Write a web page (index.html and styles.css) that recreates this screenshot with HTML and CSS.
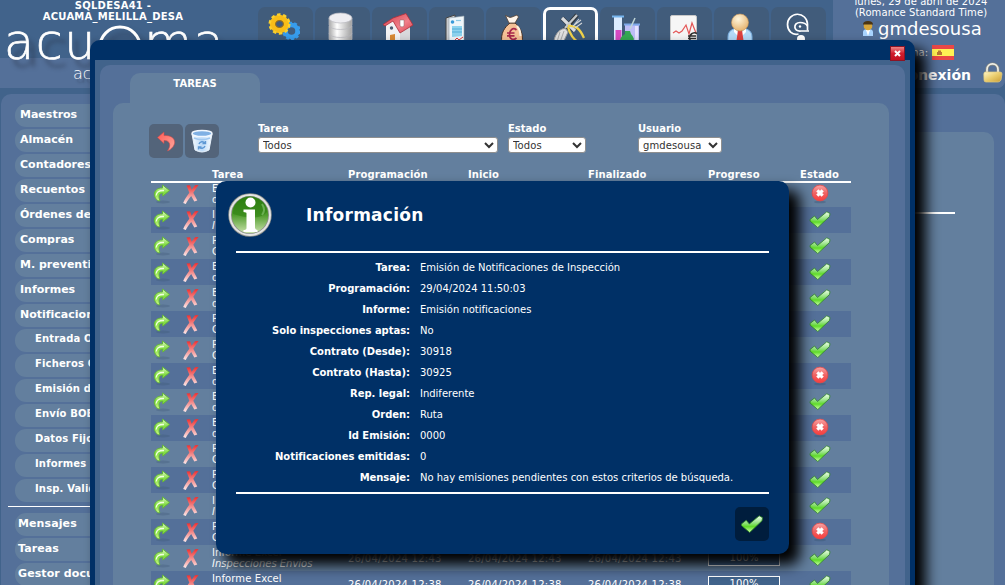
FILE: index.html
```html
<!DOCTYPE html>
<html lang="es">
<head>
<meta charset="utf-8">
<title>acuama - Tareas</title>
<link rel="stylesheet" href="styles.css">
</head>
<body>
<svg class="defs" width="0" height="0">
  <defs>
    <linearGradient id="gGreen" x1="0" y1="0" x2="0" y2="1"><stop offset="0" stop-color="#e4fac8"/><stop offset=".5" stop-color="#7ddc3c"/><stop offset="1" stop-color="#d4fb90"/></linearGradient>
    <linearGradient id="gCheck" x1="0" y1="0" x2="0" y2="1"><stop offset="0" stop-color="#f4fff0"/><stop offset=".45" stop-color="#8fe07a"/><stop offset=".65" stop-color="#5fdc28"/><stop offset="1" stop-color="#d2ffb0"/></linearGradient>
    <linearGradient id="gX" x1="0" y1="0" x2="0" y2="1"><stop offset="0" stop-color="#ee2f2f"/><stop offset=".5" stop-color="#f28d8d"/><stop offset="1" stop-color="#ffe9e9"/></linearGradient>
    <linearGradient id="gErr" x1="0" y1="0" x2="0" y2="1"><stop offset="0" stop-color="#f9a5a5"/><stop offset=".5" stop-color="#f06464"/><stop offset="1" stop-color="#fa3c3c"/></linearGradient>
    <linearGradient id="gMetal" x1="0" y1="0" x2="1" y2="0"><stop offset="0" stop-color="#a8a8a8"/><stop offset=".35" stop-color="#fff"/><stop offset="1" stop-color="#a0a0a0"/></linearGradient>
    <linearGradient id="gInfo" x1="0" y1="0" x2="0" y2="1"><stop offset="0" stop-color="#2c7c10"/><stop offset=".5" stop-color="#4f9c2d"/><stop offset="1" stop-color="#d5e8b8"/></linearGradient>
    <linearGradient id="gUndo" x1="0" y1="0" x2="1" y2="1"><stop offset="0" stop-color="#ff5a54"/><stop offset="1" stop-color="#ffaaa0"/></linearGradient>
    <linearGradient id="gRoof" x1="0" y1="0" x2="1" y2="1"><stop offset="0" stop-color="#d83b48"/><stop offset=".6" stop-color="#f0808a"/><stop offset="1" stop-color="#d8404c"/></linearGradient>
    <radialGradient id="gHead" cx=".4" cy=".3" r=".8"><stop offset="0" stop-color="#fff6dc"/><stop offset="1" stop-color="#e2ab62"/></radialGradient>
    <linearGradient id="gLock" x1="0" y1="0" x2="1" y2="1"><stop offset="0" stop-color="#fff6c8"/><stop offset=".5" stop-color="#e9cc6c"/><stop offset="1" stop-color="#c89c36"/></linearGradient>
    <linearGradient id="gBin" x1="0" y1="0" x2="1" y2="0"><stop offset="0" stop-color="#f4faff"/><stop offset=".5" stop-color="#bcdaf8"/><stop offset="1" stop-color="#f8fcff"/></linearGradient>
  </defs>
  <symbol id="i-redo" viewBox="0 0 18 20"><ellipse cx="10" cy="18" rx="7" ry="1.500" fill="#3c5674" opacity=".3"/><path d="M9.500 1 L16.500 6.500 L9.800 12 V9.300 C6.500 9.200 5 11.500 6.800 16.800 C4.500 17.500 1.800 14 1.300 11 C1 6.500 4.500 3.800 9.500 4 Z" fill="url(#gGreen)" stroke="#64b53a"/><path d="M3.200 11.500 C3.500 8 6 6.300 11 6.500" fill="none" stroke="#f0ffe0" stroke-width="1.300"/></symbol>
  <symbol id="i-x" viewBox="0 0 18 20"><path d="M4.500 1.500 L8 1.300 L9.700 5.800 L13 1.200 L16.500 1 L11.300 8.800 L15.300 16.500 L12.300 17.500 L9.200 12 C7 14.500 5 17.500 3.800 20 L1.200 19 C2.500 15.500 5 12 7.300 8.800 Z" fill="url(#gX)"/></symbol>
  <symbol id="i-ok" viewBox="0 0 22 18"><path d="M1 8.500 L5.500 5 L8.500 8.500 L17.800 .8 L21 2.500 L20.500 5.500 L8.800 16.500 L1.200 10.200 Z" fill="url(#gCheck)" stroke="#2d8426" stroke-width=".8" stroke-linejoin="round"/></symbol>
  <symbol id="i-err" viewBox="0 0 18 20"><ellipse cx="9" cy="18" rx="6" ry="1.300" fill="#34506e" opacity=".35"/><circle cx="9" cy="9" r="7.900" fill="url(#gErr)" stroke="#e04a4a" stroke-width=".8"/><path d="M6.300 6.300 L11.700 11.700 M11.700 6.300 L6.300 11.700" stroke="#fff" stroke-width="3.100"/></symbol>
</svg>

<div class="page">
  <header class="header">
    <div class="brand">
      <div class="db">SQLDESA41 -<br>ACUAMA_MELILLA_DESA</div>
      <div class="logo"><span>acu</span><svg class="ring" width="44" height="44" viewBox="0 0 44 44"><ellipse cx="22" cy="22" rx="20" ry="20" fill="none" stroke="#fff" stroke-width="3"/></svg><span>ma</span></div>
      <div class="slogan">acuama</div>
    </div>
    <nav class="tools">
      <a class="tool"><svg width="32" height="32" viewBox="0 0 32 32"><circle cx="23.500" cy="19" r="6" fill="none" stroke="#379ded" stroke-width="4.500"/><circle cx="23.500" cy="19" r="8.300" fill="none" stroke="#379ded" stroke-width="2" stroke-dasharray="3 2.200"/><ellipse cx="11.500" cy="12" rx="7" ry="6.500" fill="none" stroke="#f7bd18" stroke-width="5.500"/><ellipse cx="11.500" cy="12" rx="9.800" ry="9.500" fill="none" stroke="#fbd02c" stroke-width="2.400" stroke-dasharray="3.500 2.600"/><ellipse cx="11.500" cy="12" rx="4" ry="3.500" fill="none" stroke="#a8730a"/></svg></a>
      <a class="tool"><svg width="32" height="32" viewBox="0 0 32 32"><g fill="url(#gMetal)" stroke="#b8b8be" stroke-width=".7"><path d="M4 21 v6 c0 6 23 6 23 0 v-6z"/><path d="M4 14 v7 c0 6 23 6 23 0 v-7z"/><path d="M4 6 v7 c0 6 23 6 23 0 V6z"/><ellipse cx="15.500" cy="6" rx="11.500" ry="5" fill="#ededf1"/></g></svg></a>
      <a class="tool"><svg width="32" height="32" viewBox="0 0 32 32"><path d="M4 13 L11 7 L18 20 V32 H4 Z" fill="#f2f2f4"/><path d="M18 20 L28 13 V32 H18Z" fill="#d9d9dd"/><path d="M1 12.500 L11 6 L24 1.500 L31 13 L18 21 L11 9 L3 14Z" fill="url(#gRoof)" stroke="#b02e38" stroke-width=".8"/><path d="M18 8 h4 v6 l-2 1 -2-1z" fill="#fff" stroke="#8a6a6a" stroke-width=".5"/><circle cx="9.500" cy="16" r="1.700" fill="#4a5a70"/><path d="M8 32 V23 l5-1 V32z" fill="#d98a35"/></svg></a>
      <a class="tool"><svg width="32" height="32" viewBox="0 0 32 32"><path d="M7 6 L16 3 V32 H7Z" fill="#c9ccd0" stroke="#444"/><path d="M10 6 L25 4 V32 H10Z" fill="#eef6fa" stroke="#90a0aa" stroke-width=".6"/><circle cx="13.500" cy="10" r="1.800" fill="#3a9ad8"/><path d="M17 8.500 h5" stroke="#8cc8e4" stroke-width="1.200"/><path d="M13 14 h10 v10 l-10 1z" fill="#8ed3ee"/><path d="M13 17 h10 M13 20 h10" stroke="#4ca8d4" stroke-width=".9"/><path d="M15 29 l3-3 2 2 4-3" stroke="#e03838" fill="none"/></svg></a>
      <a class="tool"><svg width="32" height="32" viewBox="0 0 32 32"><path d="M14 11 C9 15 4 21 6 31 H26 C28 21 23 14 19 11Z" fill="#f5c196" stroke="#433026"/><path d="M9.500 3.500 L14 5.500 L16 5 L21 3 L22.500 5 L19 11 H13 Z" fill="#fff5ea" stroke="#554030" stroke-width=".8"/><path d="M20.500 18 C17 15 13.500 18 13.500 22.500 S17 29 20.500 26 M11 21 h7.500 M11 23.800 h7.500" fill="none" stroke="#a8284c" stroke-width="1.700"/><path d="M21 14 q3.500 4 3.500 10" stroke="#fff0e0" stroke-width="2" fill="none"/></svg></a>
      <a class="tool selected"><svg width="32" height="32" viewBox="0 0 32 32"><path d="M9 5 L22 18 M24 2 L8 21" stroke="#30363c" stroke-width="4.500"/><path d="M9 5 L22 18" stroke="#d9dcdf" stroke-width="3.200"/><path d="M24 2 L12 15" stroke="#c5c9cc" stroke-width="2.300"/><path d="M1 28 C2 20 9 14 13 16 L15 19 L9 32" fill="#e0e0e0" stroke="#999"/><path d="M7 19 L3 32 M11 18 L6 32" stroke="#999" stroke-width=".8"/><path d="M15 13 C23 12 27 16 31 25 M15 14 C17 22 20 26 26 30" fill="none" stroke="#f0d24a" stroke-width="2.300"/><path d="M20 13 L28 7 M22 15 L29 10 M21 12 L26 6" stroke="#d2d6da" stroke-width="1.100"/></svg></a>
      <a class="tool"><svg width="32" height="32" viewBox="0 0 32 32"><path d="M4 4 H12 V32 H4Z" fill="#dcecff"/><path d="M2 4.500 H14" stroke="#76b5ee" stroke-width="2"/><path d="M5.500 18 h6 v14 h-6z" fill="#d84ac2"/><path d="M15 12 H29 V32 H15Z" fill="#bdbdf7"/><path d="M14 12.500 H30" stroke="#7ca8e8" stroke-width="2"/><path d="M25 14 h3v18h-3z" fill="#e4e2ff"/><path d="M25 6 L20 17" stroke="#c0d6d6" stroke-width="1.500"/><path d="M15 19 h5 l1 3 q2 2 3 5 l-2 5 h-9 l-3-4 q1-4 5-6z" fill="#34a853"/></svg></a>
      <a class="tool"><svg width="32" height="32" viewBox="0 0 32 32"><rect x="3.500" y="3.500" width="26" height="30" rx="1.500" fill="#f6f6f6" stroke="#c8c8c8"/><path d="M6 21 l3-2 3 2 3-2 4-6 3 9 3-11 4 10" fill="none" stroke="#e45656" stroke-width="1.200"/><path d="M30 21.500 a5 5 0 1 0 1 8 M21 24 h8 M21 26.500 h8" stroke="#303030" stroke-width="1.700" fill="none"/></svg></a>
      <a class="tool"><svg width="32" height="32" viewBox="0 0 32 32"><path d="M4 32 V25 C4 18 10 16 16 16 S28 18 28 25 V32Z" fill="#b4d9f8" stroke="#78aee0"/><path d="M10 16 L16 22 L22 16 V20 L16 26 L10 20Z" fill="#fff"/><path d="M14 18 h4 l2 14 h-8z" fill="#dc3f3f"/><circle cx="16" cy="10.500" r="8.500" fill="url(#gHead)" stroke="#ca9656" stroke-width=".6"/></svg></a>
      <a class="tool"><svg width="32" height="32" viewBox="0 0 32 32"><path d="M17.500 22 C11 23.500 6.500 18.500 6.500 12.500 A10 10 0 0 1 26.500 12 V18.500" fill="none" stroke="#fff" stroke-width="1.700"/><path d="M28 19 H20 C12 20 12 10.500 19 10.500 C22 10.500 25 11.500 26.500 14" fill="none" stroke="#fff" stroke-width="1.700"/><circle cx="19" cy="14.500" r="1.200" fill="#fff"/><circle cx="20" cy="27" r="4" fill="#fff"/></svg></a>
    </nav>
    <div class="session">
      <div class="date">lunes, 29 de abril de 2024<br>(Romance Standard Time)</div>
      <div class="user"><svg width="12" height="15" viewBox="0 0 12 15"><path d="M1 15 V11 Q1 8 6 8 T11 11 V15Z" fill="#a9d4ff"/><path d="M4 9h4l-2 6z" fill="#fff"/><circle cx="6" cy="5" r="4.300" fill="#d6a63c"/><path d="M1 3.500 Q1 0 6 0 T11 3.500Z" fill="#4a3413"/></svg><span>gmdesousa</span></div>
      <div class="lang"><span>Idioma:</span><svg width="22" height="15" viewBox="0 0 22 15"><path fill="#e94747" d="M0 0h22v15H0z"/><path fill="#fff253" d="M0 4h22v7H0z"/><path d="M5 7h5v3H5zM6 5.500h3v2H6z" fill="#b97835"/></svg></div>
      <div class="exit"><b>Desconexión</b><svg width="20" height="21" viewBox="0 0 20 21"><path d="M4 11 V7.500 C4 0 15 0 15 7.500 V11" fill="none" stroke="#8d8d82" stroke-width="3"/><path d="M4 11 V7.500 C4 0 15 0 15 7.500 V11" fill="none" stroke="#efefe8" stroke-width="1.700"/><path d="M2 10 H17 Q19 10 19 12 L18 18 Q17 20 15 20 H3 Q1 20 1 18 L.8 12 Q1 10 2 10Z" fill="url(#gLock)" stroke="#e2cb80" stroke-width=".7"/></svg></div>
    </div>
  </header>

  <div class="body">
    <aside class="menu">
      <a>Maestros</a><a>Almacén</a><a>Contadores</a><a>Recuentos</a><a>Órdenes de trabajo</a><a>Compras</a><a>M. preventivo</a><a>Informes</a><a>Notificaciones</a>
      <a class="sub">Entrada OT</a><a class="sub">Ficheros OT</a><a class="sub">Emisión de</a><a class="sub">Envío BOE</a><a class="sub">Datos Fijos</a><a class="sub">Informes</a><a class="sub">Insp. Validar</a>
      <hr>
      <a class="foot">Mensajes</a><a class="foot">Tareas</a><a class="foot">Gestor docu</a>
    </aside>
    <main class="main"><div class="sheet"><div class="rule"></div></div></main>
  </div>

  <section class="window">
    <div class="titlebar"><button class="close"><svg width="9" height="9" viewBox="0 0 9 9"><path d="M2 2 L7 7 M7 2 L2 7" stroke="#fff" stroke-width="2"/></svg></button></div>
    <div class="frame">
      <div class="panel">
        <div class="tab">TAREAS</div>
        <div class="content">
          <div class="filters">
            <div class="actions">
              <button class="act"><svg width="22" height="24" viewBox="0 0 22 24"><path d="M2.500 8.500 L9 3 V6.500 C22 6 23 17 12.500 22 C16.500 16 15 11.500 9 11.500 V14.500Z" fill="url(#gUndo)" stroke="#c84c4c" stroke-width=".6"/></svg></button>
              <button class="act"><svg width="24" height="26" viewBox="0 0 24 26"><path d="M2 6 L5 22 Q12 26 19 22 L22 6Z" fill="url(#gBin)" stroke="#e8f2fc"/><ellipse cx="12" cy="5.500" rx="10" ry="3" fill="#7fb0e4" stroke="#f0f7ff" stroke-width="1.500"/><path d="M4 10 Q12 13.500 20 10" fill="none" stroke="#a0c8f0" stroke-width="1.500"/><path d="M9 16 a3.500 3.500 0 0 1 6 -1 M15 18 a3.500 3.500 0 0 1-6 1 M15.500 13v2.500h-3 M8.500 21.500v-2.500h3" fill="none" stroke="#5e98d4" stroke-width="1.400"/></svg></button>
            </div>
            <label class="f-task">Tarea<select><option>Todos</option></select></label>
            <label class="f-state">Estado<select><option>Todos</option></select></label>
            <label class="f-user">Usuario<select><option>gmdesousa</option></select></label>
          </div>
          <div class="grid head"><span></span><span></span><span>Tarea</span><span>Programación</span><span>Inicio</span><span>Finalizado</span><span>Progreso</span><span class="center">Estado</span></div>
          <div id="rows"></div>
        </div>
      </div>
    </div>
  </section>

  <section class="modal">
    <div class="modal-head">
      <svg width="46" height="46" viewBox="0 0 46 46"><circle cx="23" cy="23" r="20" fill="url(#gInfo)" stroke="#8d918c" stroke-width="3.500"/><circle cx="23" cy="23" r="20" fill="none" stroke="#e4e4e4" stroke-width="2"/><path d="M6 22 A17 17 0 0 1 40 20 Q32 30 6 22Z" fill="#267a0c" opacity=".45"/><path d="M35 12 Q39 18 35 23" stroke="#8cc978" stroke-width="2" fill="none" opacity=".6"/><circle cx="23.500" cy="10.500" r="5" fill="#fff"/><path d="M16.500 17.500 H28 V36 Q28.500 38 30.500 38 V40 H16.500 V38 Q19.500 38 19.500 36 V21.500 Q19.500 20 16.500 20Z" fill="#fff"/></svg>
      <h1>Información</h1>
    </div>
    <dl class="details">
      <dt>Tarea:</dt><dd>Emisión de Notificaciones de Inspección</dd>
      <dt>Programación:</dt><dd>29/04/2024 11:50:03</dd>
      <dt>Informe:</dt><dd>Emisión notificaciones</dd>
      <dt>Solo inspecciones aptas:</dt><dd>No</dd>
      <dt>Contrato (Desde):</dt><dd>30918</dd>
      <dt>Contrato (Hasta):</dt><dd>30925</dd>
      <dt>Rep. legal:</dt><dd>Indiferente</dd>
      <dt>Orden:</dt><dd>Ruta</dd>
      <dt>Id Emisión:</dt><dd>0000</dd>
      <dt>Notificaciones emitidas:</dt><dd>0</dd>
      <dt>Mensaje:</dt><dd>No hay emisiones pendientes con estos criterios de búsqueda.</dd>
    </dl>
    <div class="modal-foot"><button class="accept"><svg width="24" height="19"><use href="#i-ok"/></svg></button></div>
  </section>
</div>
<script src="script.js"></script>
</body>
</html>
```
FILE: styles.css
```css
* { box-sizing: border-box; }
body { margin: 0; background: #41638b; color: #fff; font: 10px/12px Verdana, "DejaVu Sans", sans-serif; }
button { border: 0; padding: 0; margin: 0; display: flex; align-items: center; justify-content: center; }
svg { flex: none; display: block; }
.defs { position: absolute; }
.page { position: relative; width: 1005px; height: 585px; overflow: hidden; background: #41638b; }

.header { display: flex; height: 88px; background: linear-gradient(#41638b 58px, #547099 58px); border-radius: 0 0 8px 0; overflow: hidden; }
.brand { width: 258px; flex: none; white-space: nowrap; }
.db { width: 226px; height: 22px; font-weight: bold; line-height: 11px; letter-spacing: .25px; text-align: center; }
.logo { display: flex; height: 44px; padding-left: 4px; font: 200 49px/42px "DejaVu Sans Light", "DejaVu Sans", sans-serif; letter-spacing: 1.7px; -webkit-text-stroke: .7px #fff; text-shadow: 6px 8px 4px rgba(40, 50, 70, .6); }
.logo .ring { margin: 3px 2px 0 1px; filter: drop-shadow(5px 7px 3px rgba(40, 50, 70, .6)); }
.slogan { padding-left: 73px; font: 200 16px/16px "DejaVu Sans Light", "DejaVu Sans", sans-serif; text-shadow: 3px 4px 2px rgba(40, 50, 70, .4); }
.tools { display: flex; gap: 2px; width: 575px; flex: none; padding-top: 7px; }
.tool { width: 55px; height: 55px; flex: none; padding: 5px 0 0 10px; border-radius: 7px; background: #415c7b; }
.tool.selected { border: 3px solid #fff; padding: 3px 0 0 7px; }
.session { flex: 1; background: #547099; white-space: nowrap; }
.date { height: 19px; margin-top: -4px; padding-left: 4px; line-height: 11px; letter-spacing: .07px; text-align: center; }
.user { display: flex; align-items: center; gap: 4px; height: 26px; padding: 2px 0 0 29px; font-size: 18px; line-height: 22px; }
.user svg { margin-top: -2px; }
.lang { display: flex; align-items: center; justify-content: flex-end; gap: 4px; height: 21px; padding: 2px 51px 0 0; }
.exit { display: flex; align-items: center; justify-content: flex-end; gap: 12px; height: 21px; padding-right: 2px; font-size: 14px; }
.exit b { padding-top: 5px; }

.body { display: flex; gap: 5px; height: 491px; margin-top: 6px; padding-left: 1px; }
.menu { width: 230px; flex: none; padding: 10px 0 0 14px; border-radius: 10px 10px 0 0; background: #547099; }
.menu a { display: block; height: 23px; margin-bottom: 2px; padding-left: 5px; border-radius: 11px; background: #637f9e; font-size: 11px; font-weight: bold; line-height: 21px; white-space: nowrap; }
.menu a.sub { padding-left: 20px; font-size: 10px; line-height: 20px; letter-spacing: .15px; }
.menu a.foot { padding-left: 3px; letter-spacing: .1px; }
.menu hr { height: 1px; margin: 4px 8px 6px -7px; border: 0; background: #fff; }
.main { flex: 1; padding: 38px 11px 0; border-radius: 10px 10px 0 0; background: #547099; }
.sheet { height: 460px; padding: 80px 39px 0; border-radius: 10px 10px 0 0; background: #637f9e; }
.rule { height: 2px; background: #fff; }

.window { position: absolute; left: 90px; top: 40px; width: 825px; height: 600px; padding: 0 5px; border-radius: 10px; background: #003066; box-shadow: 10px 10px 14px 1px #000; }
.titlebar { display: flex; justify-content: flex-end; height: 20px; padding: 6px 5px 0 0; }
.close { position: relative; z-index: 1; width: 15px; height: 15px; border: 1px solid #8b1526; background: linear-gradient(#f08484, #cf1d2d 50%, #c4101f); }
.frame { height: 580px; padding: 5px 5px 0; background: #41638b; }
.panel { height: 575px; padding: 8px 16px 0 13px; border-radius: 10px 10px 0 0; background: #547099; }
.tab { width: 130px; height: 30px; margin-left: 17px; border-radius: 10px 10px 0 0; background: #637f9e; font-weight: bold; line-height: 21px; text-align: center; }
.content { height: 537px; padding: 21px 38px 0; border-radius: 10px 10px 0 0; background: #637f9e; }
.filters { display: flex; height: 44px; margin-left: -2px; font-weight: bold; }
.actions { display: flex; gap: 2px; width: 109px; }
.act { width: 34px; height: 34px; border-radius: 5px; background: #53647a; }
.filters label { display: block; line-height: 9px; }
.filters select { display: block; width: 100%; height: 16px; margin: 4px 0 0; padding: 0; border: 1px solid #8f8f8f; border-radius: 3px; background: #fff; color: #333; font: 10px Verdana, "DejaVu Sans", sans-serif; letter-spacing: .1px; }
.f-task { width: 240px; margin-right: 10px; }
.f-state { width: 78px; margin-right: 52px; }
.f-user { width: 84px; }
.grid { display: grid; grid-template-columns: 29px 32px 136px 120px 120px 120px 80px 63px; width: 700px; height: 26px; align-items: center; white-space: nowrap; letter-spacing: .1px; }
.grid.head { height: 15px; margin-bottom: -2px; border-bottom: 2px solid #fff; font-weight: bold; }
.grid.alt { background: #547099; }
.center { text-align: center; }
.grid .name { line-height: 11px; }
.grid .name em { display: block; font-style: normal; }
.grid .name em.it { font-style: italic; letter-spacing: 0; }
.grid .when { padding-top: 2px; letter-spacing: .25px; }
.grid svg { margin-left: 2px; }
.grid .st svg { margin: 0 auto; }
.bar { width: 72px; height: 16px; border: 1px solid #fff; background: #41638b; line-height: 13px; text-align: center; }

.modal { position: absolute; left: 216px; top: 181px; width: 573px; height: 373px; padding: 0 20px; border-radius: 10px; background: #003066; box-shadow: 10px 10px 14px 1px #000; }
.modal-head { display: flex; gap: 33px; height: 72px; padding-top: 11px; border-bottom: 2px solid #fff; }
.modal-head svg { margin-left: -9px; }
.modal-head h1 { margin: 0; font-size: 17px; line-height: 46px; letter-spacing: .25px; }
.details { display: grid; grid-template-columns: 174px 1fr; column-gap: 10px; grid-auto-rows: 21px; height: 241px; margin: 0; padding-top: 4px; border-bottom: 2px solid #fff; line-height: 21px; white-space: nowrap; }
.details dt { font-weight: bold; text-align: right; letter-spacing: -.05px; }
.details dd { margin: 0; letter-spacing: -.01px; }
.modal-foot { display: flex; justify-content: flex-end; padding-top: 13px; }
.accept { width: 34px; height: 34px; border-radius: 5px; background: #001d3d; }
```
FILE: script.js
```js
const tasks = [
  ['E', 'd', 'err'], ['I', 'I', 'ok', 1], ['P', 'C', 'ok'], ['E', 'd', 'ok'],
  ['E', 'd', 'ok'], ['P', 'C', 'ok'], ['P', 'C', 'ok'], ['E', 'd', 'err'],
  ['E', 'd', 'ok'], ['E', 'd', 'err'], ['P', 'C', 'ok'], ['P', 'C', 'ok'],
  ['I', 'I', 'ok', 1], ['P', 'C', 'err'],
  ['Informe Excel', 'Inspecciones Envios', 'ok', 1, '26/04/2024 12:43'],
  ['Informe Excel', 'Inspecciones Envios', 'ok', 1, '26/04/2024 12:38'],
];
const icon = (id, w, h) => `<svg width="${w}" height="${h}"><use href="#i-${id}"/></svg>`;
document.getElementById('rows').innerHTML = tasks.map(([a, b, state, italic, when = ''], i) => `
  <div class="grid${i % 2 ? ' alt' : ''}">
    <span>${icon('redo', 18, 20)}</span><span>${icon('x', 18, 20)}</span>
    <span class="name">${a}<em class="${italic ? 'it' : ''}">${b}</em></span>
    <span class="when">${when}</span><span class="when">${when}</span><span class="when">${when}</span>
    <span>${when ? '<div class="bar">100%</div>' : ''}</span>
    <span class="st">${state === 'ok' ? icon('ok', 22, 18) : icon('err', 18, 20)}</span>
  </div>`).join('');
```
